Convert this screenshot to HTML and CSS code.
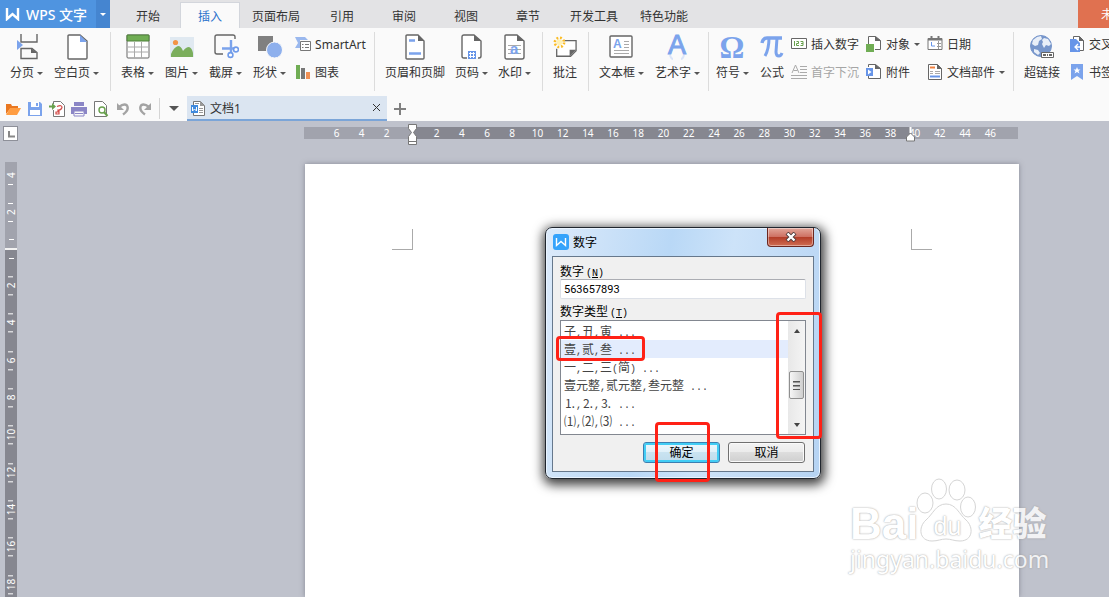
FILE: index.html
```
<!DOCTYPE html>
<html lang="zh-CN">
<head>
  <meta charset="UTF-8" />
  <meta name="viewport" content="width=device-width, initial-scale=1.0" />
  <title>WPS 文字 - 文档1</title>
  <link rel="stylesheet" href="styles.css">
</head>
<body>
  <header class="titlebar">
    <button class="app-name">
      <svg width="16" height="14" viewBox="0 0 16 14"><path d="M2 1v11l5.500-5 5.500 5V1" fill="none" stroke="#fff" stroke-width="2.400"/></svg>
      WPS 文字
    </button>
    <button class="app-menu" aria-label="菜单"><i class="caret"></i></button>
    <nav class="tabs">
      <a href="#">开始</a>
      <a href="#" class="active">插入</a>
      <a href="#">页面布局</a>
      <a href="#">引用</a>
      <a href="#">审阅</a>
      <a href="#">视图</a>
      <a href="#">章节</a>
      <a href="#">开发工具</a>
      <a href="#">特色功能</a>
    </nav>
    <button class="login">未登录</button>
  </header>

  <div class="ribbon">
    <div class="group">
      <button class="tool">
        <svg width="24" height="26" viewBox="0 0 24 26"><path d="M6 0v8h16V0M6 24.500V14.500h11l5 4v6H6z" fill="none" stroke="#666" stroke-width="1.400"/><path d="M16 14v5h6z" fill="#666"/><path d="M2 6l6 5-6 5z" fill="#7ba3ec"/></svg>
        <span>分页<i class="caret"></i></span>
      </button>
      <button class="tool">
        <svg width="24" height="26" viewBox="0 0 24 26"><path d="M4 1h11l7 6v17q0 1-1 1H4q-1 0-1-1V2q0-1 1-1z" fill="#fff" stroke="#666" stroke-width="1.400"/><path d="M15 1v7h7z" fill="#7ba3ec"/></svg>
        <span>空白页<i class="caret"></i></span>
      </button>
    </div>

    <div class="group">
      <button class="tool">
        <svg width="24" height="26" viewBox="0 0 24 26"><rect x="1" y="1" width="22" height="23" rx="1" fill="#fff" stroke="#666"/><path d="M1 1h22v6H1z" fill="#70ad54" stroke="#4f803b"/><path d="M2 13h20M2 18h20M8.500 8v16M15.500 8v16" stroke="#aaa"/></svg>
        <span>表格<i class="caret"></i></span>
      </button>
      <button class="tool">
        <svg width="24" height="26" viewBox="0 0 24 26"><path d="M0 3h24v20H0z" fill="#e0e9f1"/><circle cx="5.500" cy="8.500" r="2.600" fill="#f29446"/><path d="M1 23v-3q3-7 7-8 3 0 5 5 3-4 6-4 3 1 4 6v4z" fill="#7bae5c"/></svg>
        <span>图片<i class="caret"></i></span>
      </button>
      <button class="tool">
        <svg width="26" height="26" viewBox="0 0 26 26"><path d="M22 5V3q0-2-2-2H4Q2 1 2 3v15q0 2 2 2h6" fill="none" stroke="#666" stroke-width="1.400"/><path d="M18 6v12M9 14.500h13" stroke="#7ba3ec" stroke-width="2.400"/><circle cx="17.500" cy="21" r="2.400" fill="#fff" stroke="#6f9bea" stroke-width="1.600"/><circle cx="23" cy="15.500" r="2.400" fill="#fff" stroke="#6f9bea" stroke-width="1.600"/></svg>
        <span>截屏<i class="caret"></i></span>
      </button>
      <button class="tool">
        <svg width="26" height="26" viewBox="0 0 26 26"><path d="M1 2h15v15H1z" fill="#808080"/><circle cx="17.500" cy="16" r="8" fill="#8eb0ed" stroke="#fafafa"/></svg>
        <span>形状<i class="caret"></i></span>
      </button>
      <div class="stack first">
        <button class="small">
          <svg width="16" height="16" viewBox="0 0 16 16"><path d="M0 1h10l3 3H5v8H0l3-5z" fill="#9ab8ee"/><path d="M5.500 5.500h10v9h-10z" fill="#fff" stroke="#777"/><path d="M7 8.500h1.500M10 8.500h4M7 11.500h1.500M10 11.500h4" stroke="#777"/></svg>
          SmartArt
        </button>
        <button class="small">
          <svg width="16" height="16" viewBox="0 0 16 16"><path d="M1 1h4v14H1z" fill="#70ad54"/><path d="M6 4h4v11H6z" fill="#777"/><path d="M11 8h4v7h-4z" fill="#f19054"/></svg>
          图表
        </button>
      </div>
    </div>

    <div class="group close-set">
      <button class="tool">
        <svg width="24" height="26" viewBox="0 0 24 26"><path d="M4 1h11l6 6v17q0 1-1 1H4q-1 0-1-1V2q0-1 1-1z" fill="#fff" stroke="#666" stroke-width="1.400"/><path d="M15 1v6h6z" fill="#666"/><path d="M6 6.500h6M6 19.500h12" stroke="#7ba3ec" stroke-width="2.600"/></svg>
        <span>页眉和页脚</span>
      </button>
      <button class="tool">
        <svg width="24" height="26" viewBox="0 0 24 26"><path d="M8 24H5q-2 0-2-2V3q0-2 2-2h10l7 6v15q0 2-2 2h-1" fill="#fff" stroke="#666" stroke-width="1.400"/><path d="M15 1v6h7z" fill="#666"/><path d="M9 17h8v8H9z" fill="#6795e8"/><path d="M11.500 18v6M14.500 18v6M10 19.500h6M10 22.500h6" stroke="#fff"/></svg>
        <span>页码<i class="caret"></i></span>
      </button>
      <button class="tool">
        <svg width="24" height="26" viewBox="0 0 24 26"><path d="M4 1h11l7 6v16q0 2-2 2H5q-2 0-2-2V2q0-1 1-1z" fill="#fff" stroke="#666" stroke-width="1.400"/><path d="M15 1v6h7z" fill="#666"/><path d="M6 11.500h13M6 15.500h13M6 19.500h13" stroke="#aaa"/><text x="8" y="20" class="glyph glyph-a">a</text></svg>
        <span>水印<i class="caret"></i></span>
      </button>
    </div>

    <div class="group">
      <button class="tool">
        <svg width="24" height="26" viewBox="0 0 26 26"><path d="M12 6h13v11l-6 6H4v-8" fill="#fff" stroke="#666" stroke-width="1.400"/><path d="M18 16v7l7-7z" fill="#666"/><circle cx="7" cy="8" r="3" fill="#fff1b5"/><circle cx="7" cy="8" r="5" fill="none" stroke="#fbbd27" stroke-width="2.800" stroke-dasharray="2 1.930"/></svg>
        <span>批注</span>
      </button>
    </div>

    <div class="group narrow-end">
      <button class="tool">
        <svg width="24" height="26" viewBox="0 0 24 26"><rect x="1" y="2" width="22" height="21" rx="1" fill="#fff" stroke="#666" stroke-width="1.400"/><text x="4" y="14" class="glyph glyph-box">A</text><path d="M15 7.500h5M15 10.500h5M15 13.500h5M5 16.500h15M5 19.500h15" stroke="#aaa"/></svg>
        <span>文本框<i class="caret"></i></span>
      </button>
      <button class="tool">
        <svg width="24" height="26" viewBox="0 0 24 26"><path d="M5 21q1 4 3 4M19 21q-1 4-3 4" fill="none" stroke="#dbe5f8" stroke-width="2"/><text x="12" y="20" class="glyph glyph-art">A</text></svg>
        <span>艺术字<i class="caret"></i></span>
      </button>
    </div>

    <div class="group narrow symbols">
      <button class="tool">
        <svg width="24" height="26" viewBox="0 0 24 26"><text x="12" y="24" class="glyph glyph-serif">Ω</text></svg>
        <span>符号<i class="caret"></i></span>
      </button>
      <button class="tool">
        <svg width="24" height="26" viewBox="0 0 24 26"><path d="M2 9q1-5 5-5h15" fill="none" stroke="#7ba3ec" stroke-width="3.400"/><path d="M9 4q0 11-4 18" fill="none" stroke="#7ba3ec" stroke-width="3"/><path d="M17 4l-1 14q0 4 3 4 2 0 3-3" fill="none" stroke="#7ba3ec" stroke-width="3"/></svg>
        <span>公式</span>
      </button>
      <div class="stack">
        <button class="small">
          <svg width="16" height="16" viewBox="0 0 16 16"><path d="M.5 2.500h15v10H.5z" fill="#fff" stroke="#666"/><path d="M3.500 5v5M5.500 5.500h2v2h-2v2H8M9.500 5.500H12v4H9.500M10 7.500h2" fill="none" stroke="#68a04d"/></svg>
          插入数字
        </button>
        <button class="small" disabled>
          <svg width="16" height="16" viewBox="0 0 16 16"><path d="M1 9L4.500 1 8 9M2.500 6.500h4M9 2.500h7M9 5.500h7M9 8.500h7M0 11.500h16M0 14.500h16" fill="none" stroke="#aaa"/></svg>
          首字下沉
        </button>
      </div>
      <div class="stack">
        <button class="small">
          <svg width="16" height="16" viewBox="0 0 16 16"><path d="M2.500 8V.5h7l5 4v9H9" fill="#fff" stroke="#666"/><path d="M9 0v5h6z" fill="#666"/><path d="M0 8h8v8H0z" fill="#70ad54"/></svg>
          对象<i class="caret"></i>
        </button>
        <button class="small">
          <svg width="16" height="16" viewBox="0 0 16 16"><path d="M2.500 3V.5h7l5 4v10h-12V12" fill="#fff" stroke="#666"/><path d="M9 0v5h6z" fill="#666"/><path d="M0 4h7v8H0z" fill="#6795e8"/><path d="M2 5.500L5.500 8 2 10.500z" fill="#fff"/></svg>
          附件
        </button>
      </div>
      <div class="stack">
        <button class="small">
          <svg width="16" height="16" viewBox="0 0 16 16"><path d="M1 2.500h14v11H1z" fill="#fff" stroke="#777"/><path d="M1 3.500h14" stroke="#777" stroke-width="2"/><path d="M4.500 0v4M11.500 0v4" stroke="#777" stroke-width="2"/><path d="M10 7.500h4M10 10.500h4M11.500 5v8" stroke="#999"/><path d="M4.500 6v4H8" fill="none" stroke="#6795e8"/></svg>
          日期
        </button>
        <button class="small">
          <svg width="16" height="16" viewBox="0 0 16 16"><path d="M1.500.5h9l4 4v11h-13z" fill="#fff" stroke="#666"/><path d="M10 0v5h5z" fill="#666"/><path d="M3 3.500h5" stroke="#f08040" stroke-width="2"/><path d="M3 7.500h3M8 7.500h5M3 9.500h3M8 9.500h5" stroke="#aaa"/><path d="M3 12.500h10" stroke="#6795e8" stroke-width="2"/></svg>
          文档部件<i class="caret"></i>
        </button>
      </div>
    </div>

    <div class="group">
      <button class="tool">
        <svg width="26" height="26" viewBox="0 0 26 26"><circle cx="12" cy="12" r="10.500" fill="#7796cb" stroke="#7796cb"/><path d="M8 3l4-1 1 3-3 2-1 4-3 1-3-2 1-4zM15 4l4 1 3 5-2 2-3-1-2 3-2-4 1-2-1-2zM5 15l4 1 2 3-2 2-4-3z" fill="#e9eff8"/><path d="M12.500 18.500h12v5h-12z" fill="#fff" stroke="#666"/><path d="M14 21h3M18 21h1M20 21h3" stroke="#666" stroke-width="2"/></svg>
        <span>超链接</span>
      </button>
      <div class="stack first">
        <button class="small">
          <svg width="16" height="16" viewBox="0 0 16 16"><path d="M4.500.5h6l4 4v10h-10z" fill="#fff" stroke="#666"/><path d="M10 0v5h5z" fill="#666"/><path d="M1 3h6l4 4v9H1z" fill="#6795e8"/><path d="M11 11H6m3-3l-3 3 3 3" fill="none" stroke="#fff" stroke-width="1.300"/></svg>
          交叉引用
        </button>
        <button class="small">
          <svg width="16" height="16" viewBox="0 0 16 16"><path d="M2 0h12v16l-6-4-6 4z" fill="#7ba3ec"/><path d="M8 3l1 2.500h2.500L9.500 7l1 2.500L8 8 5.500 9.500l1-2.500-2-1.500H7z" fill="#fff"/></svg>
          书签
        </button>
      </div>
    </div>
  </div>

  <div class="quickbar">
    <button aria-label="打开"><svg width="16" height="16" viewBox="0 0 16 16"><path d="M1 13V3h5l1 2h6v3H5z" fill="#e97720"/><path d="M1 14l4-7h11l-4 7z" fill="#ff9d42"/></svg></button>
    <button aria-label="保存"><svg width="16" height="16" viewBox="0 0 16 16"><path d="M1 1h12l2 2v12H1z" fill="#7ba3ec"/><path d="M4 1h8v5H4zM3 9h10v5H3z" fill="#fff"/><path d="M9 2h2v3H9z" fill="#7ba3ec"/></svg></button>
    <button aria-label="输出为PDF"><svg width="16" height="16" viewBox="0 0 16 16"><path d="M4.500 3V.5h7l4 4v11h-11V9" fill="#fff" stroke="#777"/><path d="M0 4.500h3V2l4 3.500L3 9V6.500H0z" fill="#68a04d"/><path d="M8 5.500q5-2 5 1-1 3-4 2.500v2H7v2h3v-4" fill="none" stroke="#d34a47" stroke-width="1.200"/></svg></button>
    <button aria-label="打印"><svg width="16" height="16" viewBox="0 0 16 16"><path d="M3 1h10v4H3zM0 6h16v7H0z" fill="#8b86c6"/><path d="M3 10h10v5H3z" fill="#fafafa" stroke="#8b86c6"/><path d="M4 12.500h8" stroke="#8b86c6"/></svg></button>
    <button aria-label="打印预览"><svg width="16" height="16" viewBox="0 0 16 16"><path d="M1.500.5h8l4 4v11h-12z" fill="#fff" stroke="#777"/><circle cx="9" cy="9" r="3" fill="#fff" stroke="#68a04d" stroke-width="1.400"/><path d="M11 11l3.500 4" stroke="#68a04d" stroke-width="2"/></svg></button>
    <button aria-label="撤销"><svg width="16" height="16" viewBox="0 0 16 16"><path d="M4 6q5-4 8-1.500Q14.500 9 8 13.500" fill="none" stroke="#a3a3a3" stroke-width="2.400"/><path d="M2 2v7h7z" fill="#a3a3a3"/></svg></button>
    <button aria-label="恢复"><svg width="16" height="16" viewBox="0 0 16 16"><path d="M12 6Q7 2 4 4.500 1.500 9 8 13.500" fill="none" stroke="#a3a3a3" stroke-width="2.400"/><path d="M14 2v7H7z" fill="#a3a3a3"/></svg></button>
    <button class="more" aria-label="更多"><i class="caret big"></i></button>
    <div class="doc-tab">
      <svg width="16" height="16" viewBox="0 0 16 16"><path d="M3.500 1.500h7l4 4v10h-11z" fill="#fff" stroke="#777"/><path d="M10 1v5h5z" fill="#999"/><path d="M9 8.500h4M9 10.500h4M9 12.500h4M5 3.500h4" stroke="#999"/><path d="M1 5h7v8H1z" fill="#3f8ade"/><path d="M2.500 7v4l2-2 2 2V7" fill="none" stroke="#fff"/></svg>
      <span>文档1</span>
      <button aria-label="关闭"><svg width="9" height="9" viewBox="0 0 9 9"><path d="M1 1l7 7M8 1L1 8" stroke="#333"/></svg></button>
    </div>
    <button class="new-tab" aria-label="新建"><svg width="12" height="12" viewBox="0 0 12 12"><path d="M6 0v12M0 6h12" stroke="#808080" stroke-width="2"/></svg></button>
  </div>

  <main class="workspace">
    <aside class="side">
      <button class="tab-stop" aria-label="制表符"><svg width="7" height="7" viewBox="0 0 7 7"><path d="M1 0v5.500h6" fill="none" stroke="#888" stroke-width="2"/></svg></button>
      <div class="vruler">
        <div class="vmargin"><b>4</b><b>2</b></div>
        <div class="vbody"><b>2</b><b>4</b><b>6</b><b>8</b><b>10</b><b>12</b><b>14</b><b>16</b><b>18</b></div>
      </div>
    </aside>

    <div class="canvas">
      <div class="hruler">
        <div class="hmargin left"><b>6</b><b>4</b><b>2</b></div>
        <div class="hbody">
          <b>2</b><b>4</b><b>6</b><b>8</b><b>10</b><b>12</b><b>14</b><b>16</b><b>18</b><b>20</b>
          <b>22</b><b>24</b><b>26</b><b>28</b><b>30</b><b>32</b><b>34</b><b>36</b><b>38</b>
          <svg class="indent start" width="9" height="22" viewBox="0 0 9 22"><path d="M.5.500h8v4l-3 4 3 4v8h-8v-8l3-4-3-4z" fill="#fff" stroke="#777"/><path d="M0 17.500h9" stroke="#777"/></svg>
          <svg class="indent end" width="9" height="22" viewBox="0 0 9 22"><path d="M3.500 3h2v6h-2z" fill="#fff"/><path d="M4.500 9l4 4v4h-8v-4z" fill="#fff" stroke="#777"/></svg>
        </div>
        <div class="hmargin right"><b>40</b><b>42</b><b>44</b><b>46</b></div>
      </div>

      <div class="page">
        <div class="crop-marks"><i class="crop tl"></i><i class="crop tr"></i></div>

        <form class="dialog" role="dialog" aria-labelledby="dlg-title">
          <div class="dialog-title">
            <svg width="16" height="16" viewBox="0 0 16 16"><rect width="16" height="16" rx="3" fill="#35a3fb"/><path d="M3.500 4v7.500L8 7.500l4.500 4V4" fill="none" stroke="#fff" stroke-width="1.400"/></svg>
            <span id="dlg-title">数字</span>
            <button type="button" class="close" aria-label="关闭"><svg width="12" height="10" viewBox="0 0 12 10"><path d="M2 1l8 8M10 1L2 9" stroke="#4d3a3a" stroke-width="4"/><path d="M2.500 1.500l7 7M9.500 1.500l-7 7" stroke="#fff" stroke-width="2.400"/></svg></button>
          </div>
          <div class="dialog-body">
            <label for="num">数字<span class="en">(<u>N</u>)</span></label>
            <input type="text" id="num" value="563657893">
            <label id="type-label">数字类型<span class="en">(<u>T</u>)</span></label>
            <div class="list">
              <ul role="listbox" aria-labelledby="type-label">
                <li role="option">子<s>,</s>丑<s>,</s>寅<s> ...</s></li>
                <li role="option" class="selected" aria-selected="true">壹<s>,</s>贰<s>,</s>叁<s> ...</s></li>
                <li role="option">一<s>,</s>二<s>,</s>三<s>(</s>简<s>) ...</s></li>
                <li role="option">壹元整<s>,</s>贰元整<s>,</s>叁元整<s> ...</s></li>
                <li role="option">⒈<s>,</s>⒉<s>,</s>⒊<s> ...</s></li>
                <li role="option">⑴<s>,</s>⑵<s>,</s>⑶<s> ...</s></li>
              </ul>
              <div class="scrollbar">
                <i class="arrow up"></i>
                <div class="thumb"><svg width="7" height="9" viewBox="0 0 7 9"><path d="M0 .5h7M0 4.500h7M0 8.500h7" stroke="#555"/><path d="M0 1.500h7M0 5.500h7" stroke="#999"/></svg></div>
                <i class="arrow down"></i>
              </div>
            </div>
            <div class="actions">
              <button type="button" class="default">确定</button>
              <button type="button">取消</button>
            </div>
          </div>
          <i class="mark mark-option"></i>
          <i class="mark mark-scroll"></i>
          <i class="mark mark-ok"></i>
        </form>

        <div class="watermark">
          <div class="brand">
            <span class="bai">Bai</span>
            <span class="paw">
              <svg width="62" height="66" viewBox="0 0 62 66"><g fill="#fff" stroke="#ccc"><ellipse cx="9" cy="25" rx="8" ry="10"/><ellipse cx="23" cy="11" rx="7.500" ry="10"/><ellipse cx="41" cy="12" rx="8" ry="10"/><ellipse cx="52" cy="29" rx="7.500" ry="10"/><path d="M30 26c10 0 13 10 20 16 8 7 7 21-6 21-6 0-9-2-14-2s-8 2-14 2C3 63 2 49 10 42c7-6 10-16 20-16z"/></g></svg>
              <em>du</em>
            </span>
            <span class="jy">经验</span>
          </div>
          <div class="site">jingyan.baidu.com</div>
        </div>
      </div>
    </div>
  </main>
</body>
</html>
```
FILE: styles.css
```
* {
  box-sizing: border-box;
}
body {
  margin: 0;
  height: 100vh;
  display: flex;
  flex-direction: column;
  overflow: hidden;
  font-family: "Noto Sans", "Noto Sans CJK SC", sans-serif;
  font-size: 12px;
  color: #333;
  background: #fafafa;
}
button {
  border: 0;
  padding: 0;
  background: none;
  font: inherit;
  color: inherit;
  white-space: nowrap;
}
svg {
  display: block;
  flex: none;
}
.caret {
  display: inline-block;
  border: 3px solid transparent;
  border-top-color: #555;
  border-bottom: 0;
}
.caret.big {
  border-width: 5px 5px 0;
}

/* Başlık ve sekmeler */
.titlebar {
  display: flex;
  flex: none;
  height: 28px;
  background: #e3e3e5;
}
.app-name {
  display: flex;
  align-items: center;
  gap: 5px;
  width: 96px;
  padding-left: 5px;
  background: #4f94e0;
  color: #fff;
  font-size: 14px;
  font-weight: 500;
}
.app-menu {
  display: flex;
  align-items: center;
  justify-content: center;
  width: 14px;
  background: #4585d0;
}
.app-menu .caret {
  border-top-color: #fff;
}
.tabs {
  display: flex;
  gap: 4px;
  flex: 1;
  padding: 3px 0 0 9px;
}
.tabs a {
  min-width: 58px;
  padding: 0 9px;
  line-height: 27px;
  text-align: center;
  color: #333;
  text-decoration: none;
}
.tabs .active {
  background: #fafafa;
  color: #2b73cc;
  box-shadow: 0 0 0 1px #d3d6dc;
  clip-path: inset(-1px -1px 0 -1px);
}
.login {
  width: 31px;
  padding-left: 23px;
  overflow: hidden;
  text-align: left;
  background: #e07150;
  color: #fff;
}

/* Ribbon */
.ribbon {
  display: flex;
  flex: none;
  height: 68px;
  padding-top: 4px;
  overflow: hidden;
}
.group {
  display: flex;
  flex: none;
  gap: 11px;
  height: 59px;
  padding: 2px 11px 0 10px;
  border-right: 1px solid #dcdcdc;
}
.group:last-child {
  border: 0;
}
.close-set {
  gap: 10px;
}
.narrow-end {
  padding-right: 8px;
}
.narrow {
  padding: 2px 8px 0 7px;
}
.tool {
  display: flex;
  flex-direction: column;
  align-items: center;
  gap: 3px;
  height: 49px;
}
.tool span {
  display: flex;
  align-items: center;
  line-height: 20px;
}
.tool .caret {
  margin-left: 3px;
}
.stack {
  display: flex;
  flex-direction: column;
  align-items: flex-start;
  gap: 8px;
  margin-left: -4px;
}
.stack.first {
  margin: 0 -3px 0 -2px;
}
.small {
  display: flex;
  align-items: center;
  gap: 4px;
  height: 20px;
}
.small:disabled {
  color: #a5a5a5;
}
.glyph {
  font-family: "Liberation Sans", sans-serif;
  font-weight: bold;
  fill: #7ba3ec;
}
.glyph-a {
  font-size: 15px;
}
.glyph-box {
  font-size: 12px;
}
.glyph-art {
  font-size: 27px;
  font-weight: normal;
  text-anchor: middle;
  stroke: #7ba3ec;
}
.glyph-serif {
  font-family: "Liberation Serif", serif;
  font-size: 31px;
  text-anchor: middle;
}

/* Hızlı erişim */
.quickbar {
  display: flex;
  flex: none;
  height: 25px;
  padding-left: 2px;
}
.quickbar > button {
  display: flex;
  align-items: center;
  justify-content: center;
  width: 22px;
}
.quickbar .more {
  width: 28px;
  height: 21px;
  margin: 2px 0 0 3px;
  border-left: 1px solid #d5d5d5;
}
.doc-tab {
  display: flex;
  align-items: center;
  gap: 4px;
  width: 200px;
  padding: 0 6px 0 3px;
  background: #dbe5f1;
  border-bottom: 2px solid #7ba5d8;
}
.doc-tab span {
  flex: 1;
}
.quickbar .new-tab {
  width: 26px;
}

/* Çalışma alanı */
.workspace {
  display: flex;
  flex: 1;
  min-height: 0;
  overflow: hidden;
  background: #bfc2cc;
}
.side {
  display: flex;
  flex-direction: column;
  width: 24px;
  padding: 5px 0 0 3px;
}
.tab-stop {
  display: flex;
  align-items: flex-end;
  justify-content: flex-end;
  flex: none;
  width: 15px;
  height: 15px;
  padding: 2px;
  background: #fff;
  border: 1px solid #8e9099;
}
.vruler {
  flex: 1;
  min-height: 0;
  width: 12px;
  margin: 21px 0 0 2px;
  overflow: hidden;
  background: #868790;
}
.hruler b,
.vruler b {
  font-size: 10px;
  font-weight: 400;
  line-height: 12px;
  color: #fff;
}
.vruler b {
  display: flex;
  align-items: center;
  justify-content: center;
  writing-mode: vertical-rl;
  transform: rotate(180deg);
  background:
    linear-gradient(#fff, #fff) center 9px / 5px 1px no-repeat,
    linear-gradient(#fff, #fff) center calc(100% - 9px) / 5px 1px no-repeat;
}
.vmargin {
  display: flex;
  flex-direction: column;
  justify-content: flex-end;
  height: 88px;
  padding-bottom: 17px;
  background:
    linear-gradient(#fff, #fff) center 77px / 5px 1px no-repeat #a1a3ad;
  border-bottom: 2px solid #f2f2f2;
}
.vmargin b {
  flex: none;
  height: 37px;
}
.vmargin b:first-child {
  background: linear-gradient(#fff, #fff) center 9px / 5px 1px no-repeat;
}
.vbody {
  display: grid;
  grid-template-rows: repeat(9, 1fr);
  height: 353px;
  max-height: 100%;
  padding-top: 17px;
  background: linear-gradient(#fff, #fff) center 8px / 5px 1px no-repeat;
}
.canvas {
  display: flex;
  flex-direction: column;
  flex: 1;
  min-width: 0;
  padding: 6px 0 0 280px;
}
.hruler {
  display: flex;
  flex: none;
  width: 714px;
  height: 12px;
  text-align: center;
}
.hruler div {
  display: grid;
  grid-auto-flow: column;
  grid-auto-columns: 1fr;
}
.hmargin {
  width: 108px;
  background: #a1a3ad;
}
.hmargin.left {
  padding: 0 13px 0 20px;
}
.hmargin.right {
  width: 116px;
  margin-left: -8px;
  padding-right: 15px;
  background: linear-gradient(90deg, #868790 8px, #a1a3ad 8px);
}
.hruler .hbody {
  position: relative;
  flex: 1;
  padding: 0 7px 0 12px;
  background: #868790;
}
.indent {
  position: absolute;
  top: -3px;
  z-index: 1;
}
.indent.start {
  left: -4px;
}
.indent.end {
  right: -5px;
}

/* Sayfa */
.page {
  position: relative;
  flex: 1;
  width: 714px;
  margin: 25px 0 0 1px;
  padding: 65px 87px;
  background: #fff;
  box-shadow: 0 0 5px rgba(80, 82, 95, 0.5);
}
.crop-marks {
  display: flex;
  justify-content: space-between;
}
.crop {
  width: 21px;
  height: 21px;
  border-bottom: 1px solid #aaa;
}
.crop.tl {
  border-right: 1px solid #aaa;
}
.crop.tr {
  border-left: 1px solid #aaa;
}

/* Sayı penceresi */
.dialog {
  position: absolute;
  left: 240px;
  top: 63px;
  width: 276px;
  padding: 0 6px 6px;
  border: 1px solid #20262e;
  border-radius: 7px;
  background: linear-gradient(100deg, #dceafa, #b9d8f6 40%, #cde3f9 60%, #b5d3f3);
  box-shadow: inset 0 0 0 1px #eaf4ff, 1px 3px 11px 3px rgba(0, 0, 0, 0.75);
  color: #000;
}
.dialog-title {
  display: flex;
  align-items: center;
  gap: 4px;
  height: 28px;
  padding-left: 1px;
}
.dialog-title span {
  flex: 1;
}
.close {
  display: flex;
  align-items: center;
  justify-content: center;
  align-self: flex-start;
  width: 47px;
  height: 19px;
  border: 1px solid #6b2720;
  border-top: 0;
  border-radius: 0 0 4px 4px;
  background: linear-gradient(#e2a79b, #ce7163 48%, #b23b27 50%, #cf6d52);
  box-shadow: inset 0 0 0 1px rgba(255, 255, 255, 0.4);
}
.dialog-body {
  padding: 7px 7px 8px;
  background: #f0f0f0;
  border: 1px solid #66788c;
}
.dialog label {
  display: block;
  height: 15px;
  line-height: 15px;
}
.en {
  margin-left: 2px;
  font-family: "Liberation Mono", monospace;
  font-size: 10px;
}
.dialog input {
  display: block;
  width: 100%;
  height: 20px;
  margin-bottom: 5px;
  padding: 0 3px;
  border: 1px solid #dde1e8;
  border-top-color: #abadb3;
  border-radius: 2px;
  font-family: Roboto, sans-serif;
  font-size: 11px;
  color: #000;
}
.list {
  display: flex;
  height: 115px;
  margin-top: 1px;
  background: #fff;
  border: 1px solid #828790;
}
.list ul {
  flex: 1;
  margin: 0;
  padding: 1px 0 0;
  list-style: none;
  color: #444;
}
.list li {
  padding-left: 3px;
  line-height: 18px;
  height: 18px;
  white-space: pre;
  font-family: "Noto Sans CJK SC", sans-serif;
}
.list s {
  text-decoration: none;
  font-family: "Liberation Mono", monospace;
  font-size: 10px;
}
.list .selected {
  background: #e3ecfd;
}
.scrollbar {
  display: flex;
  flex-direction: column;
  align-items: center;
  width: 17px;
  padding: 8px 0 7px;
  background: linear-gradient(90deg, #e8e8e8, #f4f4f4);
}
.arrow {
  border: 3px solid transparent;
}
.arrow.up {
  border-top: 0;
  border-bottom: 4px solid #444;
}
.arrow.down {
  margin-top: auto;
  border-bottom: 0;
  border-top: 4px solid #444;
}
.thumb {
  display: flex;
  align-items: center;
  justify-content: center;
  width: 15px;
  height: 28px;
  margin-top: 38px;
  border: 1px solid #8f8f8f;
  border-radius: 2px;
  background: linear-gradient(90deg, #f6f6f6, #cfcfcf);
}
.actions {
  display: flex;
  justify-content: flex-end;
  gap: 8px;
  padding: 7px 1px 0 0;
}
.actions button {
  width: 77px;
  height: 21px;
  border: 1px solid #707070;
  border-radius: 3px;
  background: linear-gradient(#f3f3f3, #ebebeb 48%, #dddddd 50%, #cfcfcf);
  box-shadow: inset 0 0 0 1px #fafafa;
  line-height: 18px;
}
.actions .default {
  border-color: #3c7fb1;
  background: linear-gradient(#eef7fc, #e0f0f9 48%, #c9e3f1 50%, #c0dcec);
  box-shadow: inset 0 0 0 2px #42cdf5;
}

/* Kırmızı işaretler */
.mark {
  position: absolute;
  border: 3px solid #ff2116;
  border-radius: 4px;
  pointer-events: none;
}
.mark-option {
  left: 10px;
  top: 108px;
  width: 89px;
  height: 25px;
}
.mark-scroll {
  left: 230px;
  top: 84px;
  width: 46px;
  height: 127px;
}
.mark-ok {
  left: 109px;
  top: 194px;
  width: 55px;
  height: 60px;
}

.watermark {
  position: absolute;
  left: 545px;
  top: 314px;
  white-space: nowrap;
  color: #fff;
  font-family: "Liberation Sans", "Noto Sans CJK SC", sans-serif;
  text-shadow: 0 0 2px #999, 0 0 1px #bbb;
  opacity: 0.8;
}
.brand {
  display: flex;
  align-items: flex-end;
  height: 66px;
}
.bai {
  font-size: 44px;
  font-weight: bold;
  line-height: 40px;
}
.paw {
  position: relative;
  margin-left: -2px;
}
.paw em {
  position: absolute;
  left: 0;
  right: 0;
  bottom: 4px;
  text-align: center;
  font-size: 25px;
  font-style: normal;
  line-height: 28px;
}
.jy {
  font-size: 34px;
  font-weight: 900;
  line-height: 40px;
}
.site {
  font-family: "Noto Sans", sans-serif;
  font-size: 23px;
  line-height: 30px;
}
```
